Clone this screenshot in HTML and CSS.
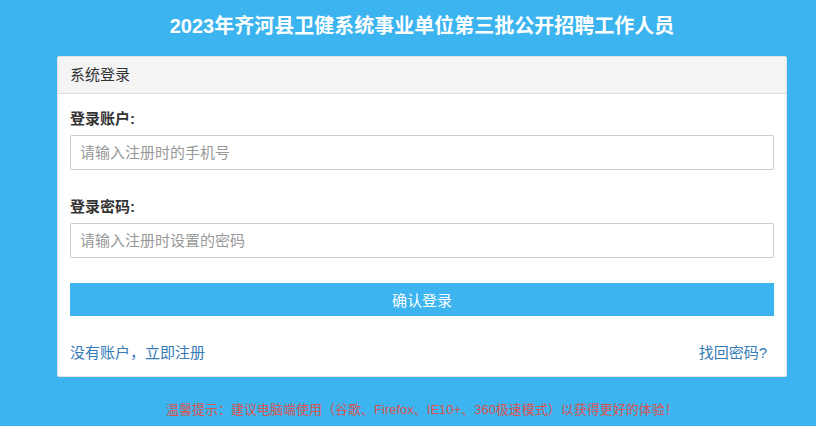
FILE: index.html
```html
<!DOCTYPE html>
<html lang="zh-CN">
<head>
  <meta charset="UTF-8" />
  <meta name="viewport" content="width=device-width, initial-scale=1.0"/>
  <title>系统登录</title>
  <link rel="stylesheet" href="styles.css">
</head>
<body>
  <div class="wrap">
    <h1 class="title">2023年齐河县卫健系统事业单位第三批公开招聘工作人员</h1>

    <div class="panel">
      <div class="panel-heading">系统登录</div>
      <form class="panel-body">
        <div class="field">
          <label for="account">登录账户:</label>
          <input type="text" id="account" placeholder="请输入注册时的手机号">
        </div>
        <div class="field">
          <label for="password">登录密码:</label>
          <input type="password" id="password" placeholder="请输入注册时设置的密码">
        </div>
        <button type="submit" class="btn">确认登录</button>
        <div class="links">
          <a href="#">没有账户，立即注册</a>
          <a href="#">找回密码?</a>
        </div>
      </form>
    </div>

    <p class="tip">温馨提示：建议电脑端使用（谷歌、Firefox、IE10+、360极速模式）以获得更好的体验！</p>
  </div>
</body>
</html>
```

FILE: styles.css
```css
body {
  margin: 0;
  background: #3bb4ef;
  font-family: "Liberation Sans", "Noto Sans CJK SC", sans-serif;
  font-size: 15px;
  color: #333;
}

.wrap {
  width: 730px;
  margin-left: 57px;
}

.title {
  margin: 0;
  height: 56px;
  line-height: 52px;
  text-align: center;
  color: #fff;
  font-size: 20px;
  font-weight: bold;
}

.panel {
  background: #fff;
  border: 1px solid #e2e2e2;
  border-radius: 2px;
}

.panel-heading {
  height: 36px;
  line-height: 36px;
  padding: 0 12px;
  background: #f4f4f4;
  border-bottom: 1px solid #dedede;
  color: #333;
}

.panel-body {
  padding: 15px 12px 13px;
}

.field label {
  display: block;
  font-weight: bold;
  line-height: 20px;
  margin-bottom: 6px;
}

.field input {
  display: block;
  box-sizing: border-box;
  width: 100%;
  height: 35px;
  padding: 0 9px;
  border: 1px solid #ccc;
  border-radius: 2px;
  font-family: inherit;
  font-size: 15px;
  margin-bottom: 27px;
}

.field input::placeholder {
  color: #999;
}

.field:nth-child(2) input {
  margin-bottom: 25px;
}

.btn {
  display: block;
  width: 100%;
  height: 33px;
  border: none;
  background: #3bb4ef;
  color: #fff;
  font-family: inherit;
  font-size: 15px;
  cursor: pointer;
}

.links {
  display: flex;
  justify-content: space-between;
  padding: 0 7px 0 0;
  margin-top: 27px;
  line-height: 20px;
}

.links a {
  color: #337ab7;
  text-decoration: none;
}

.tip {
  margin: 22px 0 0;
  text-align: center;
  color: #d9534f;
  font-size: 13px;
}
```
